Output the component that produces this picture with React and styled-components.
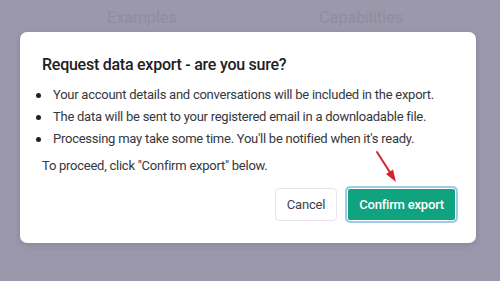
import React from "react";
import styled, { createGlobalStyle } from "styled-components";

const GlobalStyle = createGlobalStyle`
  html, body {
    margin: 0;
    padding: 0;
    background: #9a98aa;
  }
  * {
    box-sizing: border-box;
  }
`;

const Page = styled.div`
  position: relative;
  width: 500px;
  height: 281px;
  overflow: hidden;
  background: #9a98aa;
  font-family: Roboto, "Noto Sans", sans-serif;
`;

// faded page content behind the dialog
const HeaderRow = styled.div`
  display: grid;
  grid-template-columns: 200px 200px;
  column-gap: 19px;
  padding: 8px 0 0 42px;
  color: #8f8da1;
  font-size: 16px;
  line-height: 20px;
`;

const HeaderCell = styled.div`
  text-align: center;
`;

const Modal = styled.div`
  position: absolute;
  left: 20px;
  top: 32px;
  width: 456px;
  height: 211px;
  background: #ffffff;
  border-radius: 7px;
  padding: 23px 18px 20px 22px;
  display: flex;
  flex-direction: column;
  box-shadow: 0 2px 6px rgba(40, 38, 60, 0.15);
`;

const Title = styled.h2`
  margin: 0 0 9px;
  font-size: 16px;
  line-height: 20px;
  font-weight: 500;
  letter-spacing: -0.25px;
  color: #202123;
`;

const BulletList = styled.ul`
  margin: 0;
  padding: 0;
  list-style: none;
`;

const Bullet = styled.li`
  position: relative;
  padding-left: 11px;
  font-size: 13px;
  line-height: 22px;
  letter-spacing: -0.25px;
  white-space: nowrap;
  color: #353740;

  &::before {
    content: "";
    position: absolute;
    left: -6px;
    top: 9px;
    width: 5px;
    height: 5px;
    border-radius: 50%;
    background: #202123;
  }
`;

const Note = styled.p`
  margin: 5px 0 0;
  font-size: 13px;
  line-height: 22px;
  letter-spacing: -0.25px;
  color: #353740;
`;

const Actions = styled.div`
  margin-top: auto;
  display: flex;
  justify-content: flex-end;
  align-items: center;
  gap: 8px;
`;

const CancelButton = styled.button`
  height: 33px;
  padding: 0 11px;
  background: #ffffff;
  border: 1px solid #e5e5ea;
  border-radius: 4px;
  font-family: inherit;
  font-size: 13px;
  letter-spacing: -0.2px;
  color: #40414f;
`;

const ConfirmButton = styled.button`
  height: 37px;
  padding: 0 12px;
  background: #10a37f;
  border: 2px solid #9fcbe8;
  border-radius: 5px;
  box-shadow: 0 0 0 1px #ffffff inset;
  font-family: inherit;
  font-size: 13px;
  font-weight: 500;
  letter-spacing: -0.2px;
  color: #ffffff;
`;

const Arrow = styled.svg`
  position: absolute;
  left: 370px;
  top: 148px;
`;

export default function App() {
  return (
    <>
      <GlobalStyle />
      <Page>
        <HeaderRow>
          <HeaderCell>Examples</HeaderCell>
          <HeaderCell>Capabilities</HeaderCell>
        </HeaderRow>
        <Modal>
          <Title>Request data export - are you sure?</Title>
          <BulletList>
            <Bullet>Your account details and conversations will be included in the export.</Bullet>
            <Bullet>The data will be sent to your registered email in a downloadable file.</Bullet>
            <Bullet>Processing may take some time. You'll be notified when it's ready.</Bullet>
          </BulletList>
          <Note>To proceed, click "Confirm export" below.</Note>
          <Actions>
            <CancelButton>Cancel</CancelButton>
            <ConfirmButton>Confirm export</ConfirmButton>
          </Actions>
        </Modal>
        <Arrow width="32" height="40" viewBox="0 0 32 40">
          <line x1="7" y1="4" x2="21" y2="26" stroke="#d3232c" strokeWidth="2" strokeLinecap="round" />
          <path d="M26 34 L16 26 L23 21.5 Z" fill="#d3232c" />
        </Arrow>
      </Page>
    </>
  );
}
